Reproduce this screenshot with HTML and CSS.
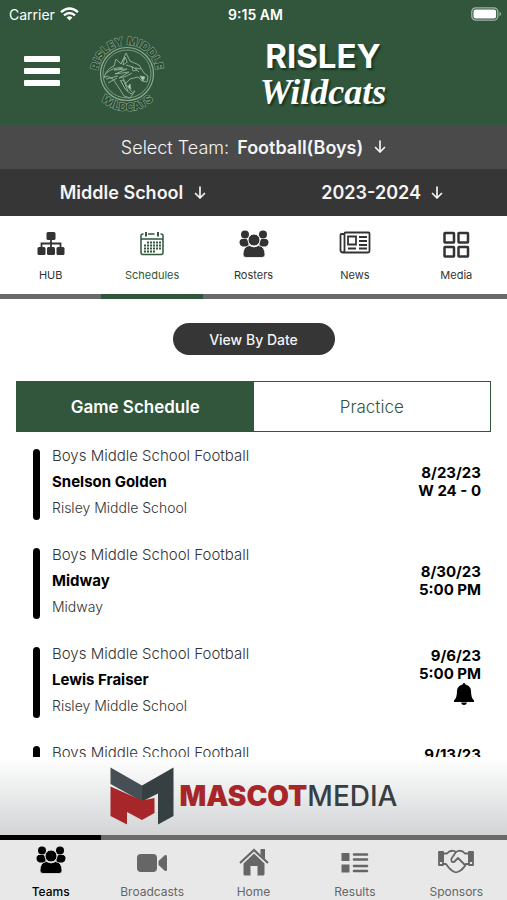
FILE: index.html
```html
<!DOCTYPE html>
<html lang="en">

<head>
    <meta charset="UTF-8">
    <meta name="viewport" content="width=device-width, initial-scale=1.0">
    <title>Risley Wildcats - Schedules</title>
    <link rel="stylesheet" href="styles.css">
</head>

<body>

    <!-- shared icons -->
    <svg width="0" height="0" class="sprite" aria-hidden="true">
        <symbol id="arrow" viewBox="0 0 12 14">
            <path d="M6 1v11M1.500 7.500 6 12l4.500-4.500" fill="none" stroke="currentColor" stroke-width="1.700" stroke-linecap="round" stroke-linejoin="round" />
        </symbol>
        <symbol id="people" viewBox="0 0 30 28">
            <circle cx="6" cy="4.500" r="4" />
            <circle cx="24" cy="4.500" r="4" />
            <path d="M2.500 9h5l2 2v5.500h-6Q.5 15.500.5 12 .5 10 2.500 9zM27.500 9h-5l-2 2v5.500h6q3-1 3-4.500 0-2-2-3z" />
            <circle cx="15" cy="10" r="6" stroke="var(--icon-bg)" />
            <path d="M10.500 15.500q4.500 3 9 0 6.500 1 6.500 9 0 3-3 3H7q-3 0-3-3 0-8 6.500-9z" stroke="var(--icon-bg)" stroke-width=".8" />
        </symbol>
        <symbol id="bell" viewBox="0 0 20 22">
            <path d="M10 0q1.500 0 1.500 1.500Q17 3 17 8q0 7 3 9.500V19H0v-1.500Q3 15 3 8q0-5 5.500-6.500Q8.500 0 10 0zM7 19.500h6Q12.500 22 10 22t-3-2.500z" />
        </symbol>
    </svg>

    <header class="header">
        <div class="status">
            <div class="carrier">
                <span>Carrier</span>
                <svg width="19" height="14" viewBox="0 0 19 14" fill="none" stroke="#fff" stroke-width="2.400">
                    <path d="M1 5.200q8.500-7.500 17 0M4 8.400q5.500-4.800 11 0" />
                    <path d="M6.600 10.500q2.900-2.300 5.800 0L9.500 13.600z" fill="#fff" stroke="none" />
                </svg>
            </div>
            <span class="clock">9:15 AM</span>
            <svg class="battery" width="31" height="14" viewBox="0 0 31 14">
                <rect x=".8" y=".8" width="26" height="12.400" rx="4" fill="none" stroke="#a3b5a9" stroke-width="1.300" />
                <rect x="2.500" y="2.500" width="22.600" height="9" rx="2" fill="#fff" />
                <path d="M28.500 4.500q3 2.500 0 5z" fill="#a3b5a9" />
            </svg>
        </div>
        <div class="brand">
            <button class="menu" aria-label="Menu"><span></span><span></span><span></span></button>
            <svg class="crest" width="78" height="78" viewBox="0 0 78 78">
                <defs>
                    <path id="top-arc" d="M12.400 50.500a29 29 0 1 1 53.200 0" />
                    <path id="bottom-arc" d="M2 39a37 37 0 0 0 74 0" />
                </defs>
                <g fill="none" stroke="#8eab93">
                    <circle cx="39" cy="39" r="26.500" stroke-width="1.200" />
                    <circle cx="39" cy="39" r="24" stroke-width=".8" />
                </g>
                <g class="crest-text" text-anchor="middle">
                    <text><textPath href="#top-arc" startOffset="50%">RISLEY MIDDLE</textPath></text>
                    <text><textPath href="#bottom-arc" startOffset="50%">WILDCATS</textPath></text>
                </g>
                <g stroke="#8eab93" stroke-width="1" stroke-linejoin="round" fill="#31563c">
                    <path d="M16 43q2-9 10-12l2-7 5 5 5-11 4 8 9 4 5 8 4 3-1 6-5-1-4-4-8 2-5 5 4 6 6 1-5 7-6-2-5-8-6-9-6-3z" />
                    <path d="M17 39q9-8 18-6l-9 2 13-1-12 5 14-2-10 6q8-1 13-5M18 44l12-3M20 48l9-5M33 29l4-7 2 6M38 30l7 2 6 5M47 33l6 1M32 45l6 10 5 4 4-3M35 43l4 8 5 6" />
                    <path d="m37 22-2 8 4-3zM44 32l5 3-4 1zM35 45l5 11-2-1-5-9z" fill="#173a22" />
                    <path d="m57 42-2 4-3-5zM43 54l-1-5-2 3z" fill="#c3d3c6" />
                </g>
            </svg>
            <h1 class="team-name">RISLEY <span>Wildcats</span></h1>
        </div>
    </header>

    <div class="filter filter-team">
        <label for="team">Select Team:</label>
        <div class="picker">
            <select id="team">
                <option>Football(Boys)</option>
            </select>
            <svg width="12" height="14"><use href="#arrow" /></svg>
        </div>
    </div>
    <div class="filter filter-level">
        <div class="picker">
            <select aria-label="Level">
                <option>Middle School</option>
            </select>
            <svg width="12" height="14"><use href="#arrow" /></svg>
        </div>
        <div class="picker">
            <select aria-label="Season">
                <option>2023-2024</option>
            </select>
            <svg width="12" height="14"><use href="#arrow" /></svg>
        </div>
    </div>

    <nav class="tabs">
        <a href="#hub">
            <svg width="30" height="28" viewBox="0 0 30 28">
                <g fill="currentColor">
                    <rect x="10.500" y="2" width="9" height="8" rx="1.500" />
                    <rect x="1.500" y="17" width="8" height="8" rx="1.500" />
                    <rect x="11" y="17" width="8" height="8" rx="1.500" />
                    <rect x="20.500" y="17" width="8" height="8" rx="1.500" />
                </g>
                <path d="M15 9v9M5.500 18v-4.500h19V18" fill="none" stroke="currentColor" stroke-width="1.800" />
            </svg>
            HUB
        </a>
        <a href="#schedules" class="active">
            <svg width="30" height="28" viewBox="0 0 30 28" fill="none" stroke="currentColor">
                <path d="M6.500 4H6q-2 0-2 2v16.500q0 2 2 2h18q2 0 2-2V6q0-2-2-2h-.5M11 4h1.500M12.500 4h5M4 9h22" stroke-width="1.500" />
                <path d="M9 2v4.500M21 2v4.500" stroke-width="2" />
                <path d="M10 12.500h14M7 15.500h17M7 18.500h17M7 21.500h12" stroke-width="1.800" stroke-dasharray="2 1" />
            </svg>
            Schedules
        </a>
        <a href="#rosters">
            <svg width="30" height="28" fill="currentColor"><use href="#people" /></svg>
            Rosters
        </a>
        <a href="#news">
            <svg width="32" height="28" viewBox="0 0 32 28" fill="none" stroke="currentColor" stroke-width="1.800">
                <path d="M5 4H2.500Q1.500 4 1.500 5v15q0 2.500 2.500 2.500h25q1.500 0 1.500-1.500V3.500q0-1-1-1h-23q-1 0-1 1V20q0 2.500-2 2.500" />
                <path d="M9 6.500h8v8H9zM20 7h8M20 11h8M20 15h8M9 18.500h8M20 18.500h8" />
            </svg>
            News
        </a>
        <a href="#media">
            <svg width="30" height="28" viewBox="0 0 30 28" fill="none" stroke="currentColor" stroke-width="2.500">
                <rect x="3.500" y="3" width="9.500" height="9.500" rx=".5" />
                <rect x="17.500" y="3" width="9.500" height="9.500" rx=".5" />
                <rect x="3.500" y="17" width="9.500" height="9.500" rx=".5" />
                <rect x="17.500" y="17" width="9.500" height="9.500" rx=".5" />
            </svg>
            Media
        </a>
    </nav>

    <main class="content">
        <button class="view-button">View By Date</button>

        <div class="switch">
            <button class="selected">Game Schedule</button>
            <button>Practice</button>
        </div>

        <ul class="games">
            <li class="game">
                <div class="info">
                    <p>Boys Middle School Football</p>
                    <h2>Snelson Golden</h2>
                    <p class="place">Risley Middle School</p>
                </div>
                <div class="time">8/23/23<br>W 24 - 0</div>
            </li>
            <li class="game">
                <div class="info">
                    <p>Boys Middle School Football</p>
                    <h2>Midway</h2>
                    <p class="place">Midway</p>
                </div>
                <div class="time">8/30/23<br>5:00 PM</div>
            </li>
            <li class="game">
                <div class="info">
                    <p>Boys Middle School Football</p>
                    <h2>Lewis Fraiser</h2>
                    <p class="place">Risley Middle School</p>
                </div>
                <div class="time">9/6/23<br>5:00 PM
                    <svg class="bell" width="20" height="22"><use href="#bell" /></svg>
                </div>
            </li>
            <li class="game">
                <div class="info">
                    <p>Boys Middle School Football</p>
                </div>
                <div class="time">9/13/23<br><br>
                    <svg class="bell" width="20" height="22"><use href="#bell" /></svg>
                </div>
            </li>
        </ul>
    </main>

    <a href="#sponsor" class="sponsor">
        <svg width="64" height="58" viewBox="0 0 64 58">
            <path d="M.5.500 32 18.500v16L.5 17z" fill="#464e56" />
            <path d="M32 18.500 63.500.500v48.500L48 57.500v-31l-16 8z" fill="#364043" />
            <path d="M.5 19.500 32 33.500 44.500 31v15L32 53l-15-8v12.500L.5 49z" fill="#a62629" />
        </svg>
        <span class="sponsor-name"><b>MASCOT</b>MEDIA</span>
    </a>

    <nav class="tabs bottom">
        <a href="#teams" class="active">
            <svg width="30" height="28" fill="currentColor"><use href="#people" /></svg>
            Teams
        </a>
        <a href="#broadcasts">
            <svg width="30" height="28" viewBox="0 0 30 28" fill="currentColor">
                <rect y="8" width="20" height="18" rx="4" />
                <path d="m21.500 15 6.500-6q2-.5 2 1.500v13q0 2-2 1.500l-6.500-6z" />
            </svg>
            Broadcasts
        </a>
        <a href="#home">
            <svg width="30" height="30" viewBox="0 0 30 30" fill="currentColor">
                <path d="M4.500 17.500 15 7.500l10.500 10V28q0 1.500-1.500 1.500h-5.500V20h-7v9.500H6q-1.500 0-1.500-1.500z" />
                <path d="M1 17 15 4l14 13" fill="none" stroke="currentColor" stroke-width="2.200" />
                <path d="M21.500 3H26v10l-4.500-4z" />
            </svg>
            Home
        </a>
        <a href="#results">
            <svg width="30" height="28" viewBox="0 0 30 28" fill="currentColor">
                <path d="M1.500 7h8v8h-8zM1.500 18.500h8v8h-8z" />
                <path d="M14 8.500h13M14 13.500h13M14 20h13M14 25h13" stroke="currentColor" stroke-width="2.600" stroke-linecap="round" />
            </svg>
            Results
        </a>
        <a href="#sponsors">
            <svg width="36" height="28" viewBox="0 0 36 28" fill="none" stroke="currentColor" stroke-width="1.800" stroke-linejoin="round" stroke-linecap="round">
                <path d="M1 6h4v13H1zM31 6h4v13h-4z" />
                <path d="M2 7h3v8H2zM31 7h3v8h-3z" fill="currentColor" />
                <path d="M5 7.500h4q3-3.500 7-2.500l2 1 2-1q4-1 7 2.500h4M5 18h3q4 6 8.500 8 1.500.700 3 0Q25 24 28 18h3M18 6l-4.500 6.500q-1 4 2.500 3.500l4-4 6.500 6.500" />
            </svg>
            Sponsors
        </a>
    </nav>

</body>

</html>
```
FILE: styles.css
```css
:root {
    --green: #31563c;
    --dark: #363636;
    --grey: #696969;
    --icon-bg: #fff;
}

* {
    margin: 0;
    padding: 0;
    box-sizing: border-box;
}

body {
    height: 100vh;
    display: flex;
    flex-direction: column;
    overflow: hidden;
    background-color: #fff;
    font-family: Inter, sans-serif;
}

a {
    color: inherit;
    text-decoration: none;
}

button,
select {
    border: none;
    background: none;
    color: inherit;
    font: inherit;
    cursor: pointer;
}

.sprite {
    position: absolute;
}

/* header */

.header {
    background-color: var(--green);
    color: #fff;
}

.status {
    display: grid;
    grid-template-columns: 1fr auto 1fr;
    align-items: center;
    height: 28px;
    padding: 0 5px 0 9px;
    font-size: 14px;
}

.carrier {
    display: flex;
    align-items: center;
    gap: 5px;
}

.clock {
    font-weight: 600;
}

.battery {
    justify-self: end;
}

.brand {
    display: flex;
    align-items: center;
    height: 97px;
    padding: 0 24px 6px;
}

.menu {
    display: flex;
    flex-direction: column;
    gap: 6px;
    width: 36px;
    margin-bottom: 6px;
}

.menu span {
    height: 6px;
    border-radius: 1px;
    background-color: #fff;
}

.crest {
    margin-left: 28px;
}

.crest-text {
    font-size: 11px;
    font-weight: 800;
    fill: #2a4c33;
    stroke: #8eab93;
    stroke-width: 1px;
    paint-order: stroke;
}

.team-name {
    width: 132px;
    margin-left: 91px;
    font-size: 33px;
    font-weight: 700;
    line-height: 36px;
    text-align: center;
    text-shadow: 2px 2px 2px #16351f;
}

.team-name span {
    display: block;
    font-family: "Liberation Serif", serif;
    font-size: 36px;
    font-style: italic;
}

/* team, level and season */

.filter {
    display: flex;
    align-items: center;
    color: #f4f4f4;
    font-size: 18px;
}

.filter-team {
    justify-content: center;
    gap: 8px;
    height: 44px;
    background-color: #4a4a4a;
}

.filter-team label {
    font-weight: 300;
}

.filter-level {
    height: 47px;
    padding-left: 8px;
    background-color: var(--dark);
}

.filter-level .picker {
    flex: 1;
}

.picker {
    display: flex;
    align-items: center;
    justify-content: center;
    gap: 10px;
}

.picker select {
    appearance: none;
    font-weight: 600;
}

/* tab bars */

.tabs {
    display: flex;
    flex-shrink: 0;
    color: #333;
    font-size: 11px;
}

.tabs a {
    flex: 1;
    display: flex;
    flex-direction: column;
    align-items: center;
    justify-content: space-between;
    height: 83px;
    padding: 14px 0 11px;
    border-bottom: 5px solid var(--grey);
    line-height: 16px;
}

.tabs .active {
    border-color: var(--green);
    color: var(--green);
}

.bottom {
    --icon-bg: #e8e8e8;
    background-color: #e8e8e8;
    color: #666;
    font-size: 12px;
}

.bottom a {
    height: 65px;
    padding: 6px 0 0;
    border-top: 5px solid var(--grey);
    border-bottom: none;
}

.bottom .active {
    border-color: #000;
    color: #000;
    font-weight: 500;
}

/* schedule */

.content {
    flex: 1;
    min-height: 0;
    overflow: hidden;
    padding: 24px 16px 0;
}

.view-button {
    display: block;
    width: 162px;
    height: 32px;
    margin: 0 auto 26px;
    border-radius: 16px;
    background-color: var(--dark);
    color: #f4f4f4;
    font-size: 14px;
    font-weight: 500;
}

.switch {
    display: flex;
    height: 51px;
    border: 1px solid var(--green);
    color: var(--green);
    font-size: 17px;
    font-weight: 300;
}

.switch button {
    flex: 1;
}

.switch .selected {
    background-color: var(--green);
    color: #fff;
    font-weight: 600;
}

.games {
    display: flex;
    flex-direction: column;
    gap: 22px;
    padding: 11px 10px 0 17px;
    list-style: none;
}

.game {
    display: flex;
    align-items: center;
    height: 77px;
}

.game::before {
    content: "";
    align-self: flex-end;
    width: 7px;
    height: 71px;
    border-radius: 4px;
    background-color: #000;
}

.info {
    flex: 1;
    align-self: flex-start;
    margin-left: 12px;
    color: #333;
    font-size: 15px;
    font-weight: 300;
    line-height: 26px;
}

.info h2 {
    color: #000;
    font-size: 15px;
    font-weight: 700;
}

.info .place {
    font-size: 14px;
}

.time {
    font-size: 15px;
    font-weight: 700;
    line-height: 18px;
    text-align: right;
}

.bell {
    display: block;
    margin: 0 7px 8px auto;
}

/* sponsor banner */

.sponsor {
    flex-shrink: 0;
    display: flex;
    align-items: center;
    justify-content: center;
    gap: 6px;
    height: 78px;
    background: linear-gradient(#fff, #d2d4d5);
}

.sponsor-name {
    color: #364043;
    font-size: 28px;
    font-weight: 500;
}

.sponsor-name b {
    color: #a62629;
    font-weight: 900;
}
```
